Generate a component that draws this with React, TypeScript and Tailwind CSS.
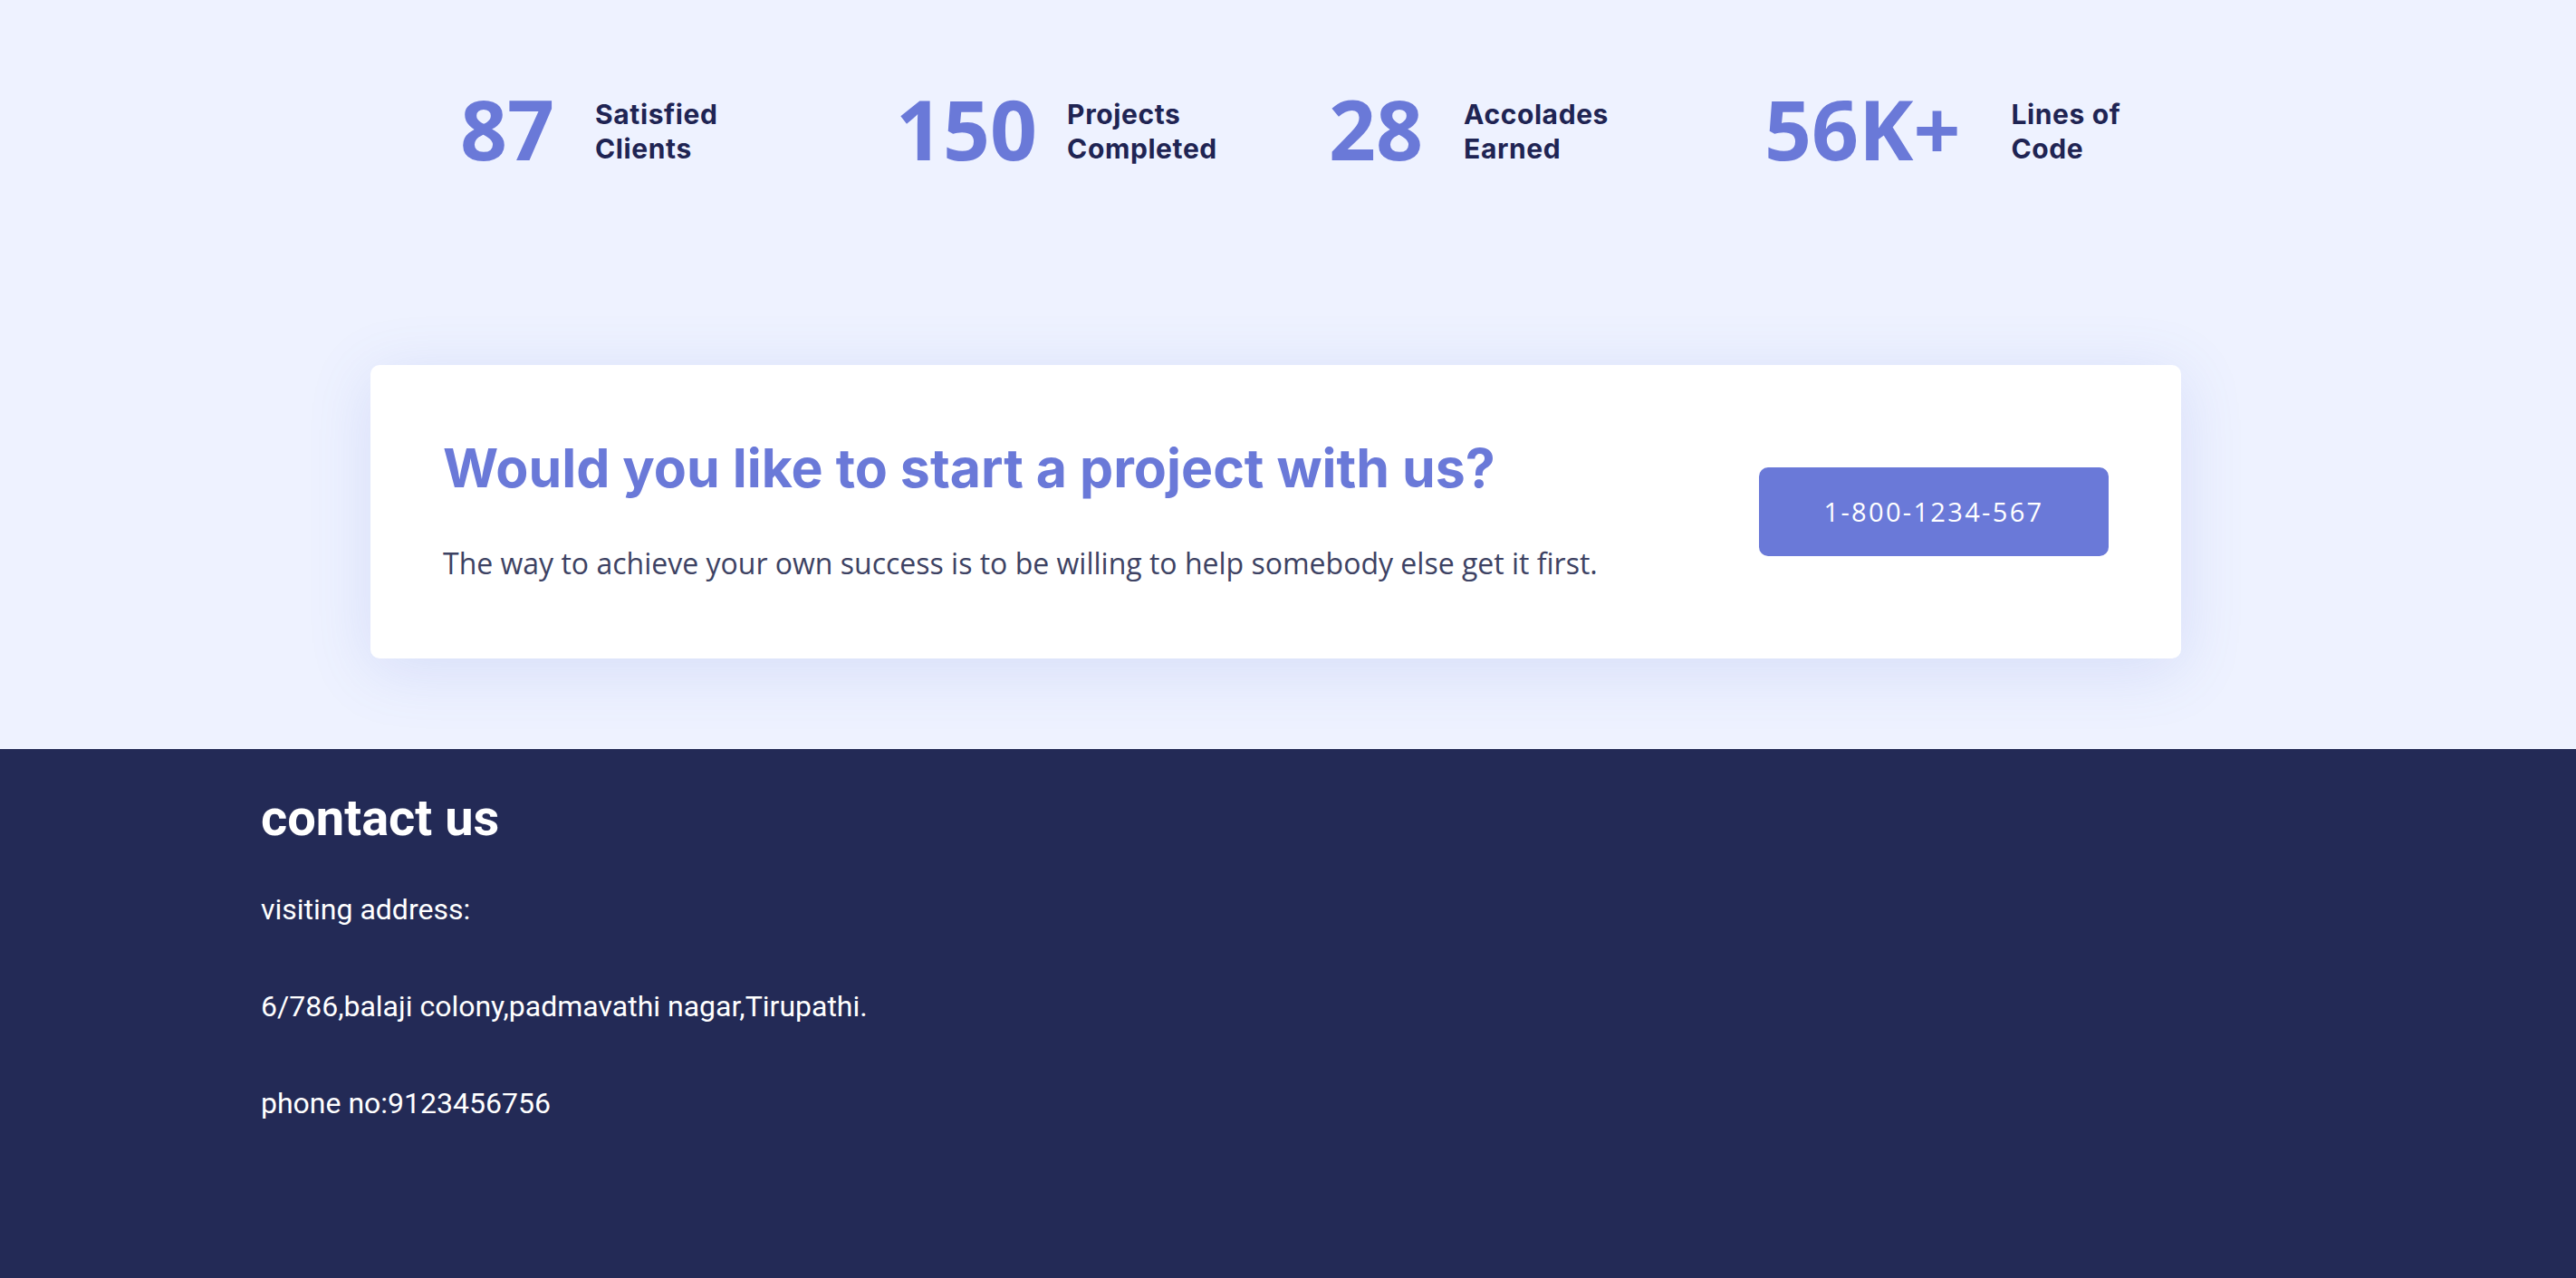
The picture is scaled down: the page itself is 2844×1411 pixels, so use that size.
const stats = [
  { value: "87", label: ["Satisfied", "Clients"], cls: "w-[481px] gap-[45px]" },
  { value: "150", label: ["Projects", "Completed"], cls: "w-[478px] gap-[33px]" },
  { value: "28", label: ["Accolades", "Earned"], cls: "w-[481px] gap-[45px]" },
  { value: "56K+", label: ["Lines of", "Code"], cls: "w-auto gap-[56px]" },
];

function Stats() {
  return (
    <div className="flex pl-[508px] pt-[97px]">
      {stats.map((s) => (
        <div key={s.value} className={`${s.cls} flex items-center`}>
          <span className="font-['Open_Sans',sans-serif] text-[91px] font-bold leading-none text-[#6a79d8]">
            {s.value}
          </span>
          <span className="mt-[4px] font-['Inter',sans-serif] text-[30px] font-bold leading-[38px] tracking-[0.02em] text-[#1f2453]">
            {s.label[0]}
            <br />
            {s.label[1]}
          </span>
        </div>
      ))}
    </div>
  );
}

function ProjectCard() {
  return (
    <div className="ml-[409px] mt-[215px] flex h-[324px] w-[1999px] items-center justify-between rounded-[10px] bg-white px-[80px] shadow-[0_12px_70px_rgba(90,110,210,0.16)]">
      <div className="flex flex-col pb-[4px]">
        <h2 className="font-['Inter',sans-serif] text-[59px] font-bold leading-[70px] text-[#6a79d8]">
          Would you like to start a project with us?
        </h2>
        <p className="mt-[48px] font-['Open_Sans',sans-serif] text-[32px] leading-[44px] text-[#3d4263]">
          The way to achieve your own success is to be willing to help somebody else get it first.
        </p>
      </div>
      <button className="flex h-[98px] w-[386px] items-center justify-center rounded-[10px] bg-[#6a79d8] font-['Open_Sans',sans-serif] text-[29px] tracking-[0.08em] text-white">
        1-800-1234-567
      </button>
    </div>
  );
}

function Footer() {
  return (
    <footer className="h-[584px] bg-[#232a56] pl-[288px] pt-[43px] font-['Roboto',sans-serif] text-white">
      <h2 className="text-[56px] font-bold leading-[66px]">contact us</h2>
      <div className="mt-[49px] flex flex-col gap-[69px] text-[32px] leading-[38px]">
        <p>visiting address:</p>
        <p>6/786,balaji colony,padmavathi nagar,Tirupathi.</p>
        <p>phone no:9123456756</p>
      </div>
    </footer>
  );
}

export default function App() {
  return (
    <div className="min-h-screen bg-[#eef2ff]">
      <section className="h-[827px]">
        <Stats />
        <ProjectCard />
      </section>
      <Footer />
    </div>
  );
}
